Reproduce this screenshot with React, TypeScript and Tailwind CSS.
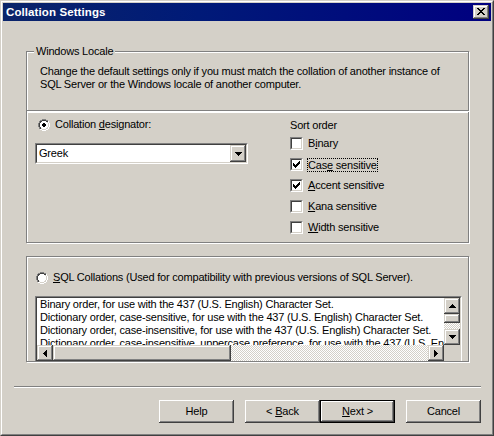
import React from "react";

function Pixels({ rows, colors, className }: { rows: string[]; colors: Record<string, string>; className?: string }) {
  const h = rows.length;
  const w = rows[0].length;
  const rects: React.ReactNode[] = [];
  rows.forEach((r, y) => {
    for (let x = 0; x < r.length; x++) {
      const c = colors[r[x]];
      if (c) rects.push(<rect key={x + "-" + y} x={x} y={y} width={1} height={1} fill={c} />);
    }
  });
  return (
    <svg width={w} height={h} viewBox={`0 0 ${w} ${h}`} shapeRendering="crispEdges" className={className}>
      {rects}
    </svg>
  );
}

const BLACK = { "#": "#000000" };

function Radio({ checked }: { checked?: boolean }) {
  const rows = [
    "....gggg....",
    "..ggddddgg..",
    ".gddwwwwddh.",
    ".gdwwwwwwlh.",
    "gdwwwwwwwwlh",
    "gdwwwwwwwwlh",
    "gdwwwwwwwwlh",
    "gdwwwwwwwwlh",
    ".gdwwwwwwlh.",
    ".gdlwwwwllh.",
    "..hhllllhh..",
    "....hhhh....",
  ];
  const dot = checked
    ? rows.map((r, y) =>
        r
          .split("")
          .map((ch, x) => {
            if ((y === 4 || y === 7) && x >= 5 && x <= 6) return "#";
            if ((y === 5 || y === 6) && x >= 4 && x <= 7) return "#";
            return ch;
          })
          .join("")
      )
    : rows;
  return (
    <Pixels
      className="shrink-0"
      rows={dot}
      colors={{ g: "#808080", d: "#404040", w: "#ffffff", l: "#d4d0c8", h: "#ffffff", "#": "#000000" }}
    />
  );
}

function Check({ checked }: { checked?: boolean }) {
  return (
    <div className="w-[13px] h-[13px] shrink-0 border border-t-[#808080] border-l-[#808080] border-r-white border-b-white">
      <div className="w-full h-full border border-t-[#404040] border-l-[#404040] border-r-[#d4d0c8] border-b-[#d4d0c8] bg-white flex items-center justify-center">
        {checked && (
          <Pixels
            colors={BLACK}
            rows={["......#", ".....##", "#...###", "##.###.", "#####..", ".###...", "..#...."]}
          />
        )}
      </div>
    </div>
  );
}

const SB_BTN =
  "bg-[#d4d0c8] shadow-[inset_-1px_-1px_0_#404040,inset_1px_1px_0_#d4d0c8,inset_-2px_-2px_0_#808080,inset_2px_2px_0_#ffffff]";

const DOWN = ["#######", ".#####.", "..###..", "...#..."];
const UP = ["...#...", "..###..", ".#####.", "#######"];
const RIGHT = ["#...", "##..", "###.", "####", "###.", "##..", "#..."];
const LEFT = ["...#", "..##", ".###", "####", ".###", "..##", "...#"];

function ArrowBtn({ rows, className }: { rows: string[]; className: string }) {
  return (
    <div className={`${SB_BTN} ${className} flex items-center justify-center shrink-0`}>
      <Pixels rows={rows} colors={BLACK} />
    </div>
  );
}

const DITHER = "bg-[repeating-conic-gradient(#ffffff_0%_25%,#d4d0c8_0%_50%)] bg-[length:2px_2px]";

function PushButton({ children, isDefault }: { children: React.ReactNode; isDefault?: boolean }) {
  const inner = (
    <div className="w-full h-full flex items-center justify-center bg-[#d4d0c8] shadow-[inset_-1px_-1px_0_#404040,inset_1px_1px_0_#ffffff,inset_-2px_-2px_0_#808080,inset_2px_2px_0_#d4d0c8]">
      <span>{children}</span>
    </div>
  );
  return (
    <div className={`w-[75px] h-[23px] shrink-0 ${isDefault ? "border border-black" : ""}`}>{inner}</div>
  );
}

export default function App() {
  const lines = [
    "Binary order, for use with the 437 (U.S. English) Character Set.",
    "Dictionary order, case-sensitive, for use with the 437 (U.S. English) Character Set.",
    "Dictionary order, case-insensitive, for use with the 437 (U.S. English) Character Set.",
    "Dictionary order, case-insensitive, uppercase preference, for use with the 437 (U.S. English) Character Set.",
  ];
  const sorts: { label: React.ReactNode; checked?: boolean; focus?: boolean }[] = [
    { label: <>B<u>i</u>nary</> },
    { label: <>Cas<u>e</u> sensitive</>, checked: true, focus: true },
    { label: <><u>A</u>ccent sensitive</>, checked: true },
    { label: <><u>K</u>ana sensitive</> },
    { label: <><u>W</u>idth sensitive</> },
  ];
  return (
    <div className="w-[494px] h-[436px] bg-[#d4d0c8] border border-t-[#d4d0c8] border-l-[#d4d0c8] border-r-[#404040] border-b-[#404040] font-['Liberation_Sans',Arial,sans-serif] text-[11px] leading-[13px] tracking-[-0.2px] text-black select-none">
      <div className="w-full h-full border border-t-white border-l-white border-r-[#808080] border-b-[#808080] p-px flex flex-col">
        {/* Title bar */}
        <div className="h-[18px] shrink-0 flex items-center bg-[linear-gradient(to_right,#0a246a,#001a78_40%,#000080)] pl-[3px] pr-[2px]">
          <span className="text-white font-bold text-[11.5px] tracking-[0.1px] flex-1">Collation Settings</span>
          <div className={`${SB_BTN} w-[16px] h-[14px] flex items-center justify-center`}>
            <Pixels
              colors={BLACK}
              rows={["##....##", ".##..##.", "..####..", "...##...", "..####..", ".##..##.", "##....##"]}
              className="-ml-px -mt-px"
            />
          </div>
        </div>

        {/* Body */}
        <div className="flex-1 flex flex-col pl-[11px] pr-[10px] pt-[30px]">
          {/* Group 1 */}
          <div className="relative ml-[12px] w-[443px] h-[60px] shrink-0 border border-[#808080] shadow-[inset_1px_1px_0_#ffffff,1px_1px_0_#ffffff]">
            <span className="absolute -top-[7px] left-[7px] px-[2px] bg-[#d4d0c8]">Windows Locale</span>
            <p className="pt-[13px] pl-[13px]">
              Change the default settings only if you must match the collation of another instance of
              <br />
              SQL Server or the Windows locale of another computer.
            </p>
          </div>

          {/* Group 2 */}
          <div className="ml-[12px] w-[443px] h-[132px] shrink-0 border border-[#808080] shadow-[inset_1px_1px_0_#ffffff,1px_1px_0_#ffffff] flex">
            <div className="pl-[8px] pt-[6px] flex flex-col">
              <div className="flex items-center h-[13px] pl-[3px]">
                <Radio checked />
                <span className="ml-[5px]">
                  Collation <u>d</u>esignator:
                </span>
              </div>
              <div className="mt-[12px] w-[213px] h-[21px] border border-t-[#808080] border-l-[#808080] border-r-white border-b-white">
                <div className="w-full h-full border border-t-[#404040] border-l-[#404040] border-r-[#d4d0c8] border-b-[#d4d0c8] bg-white flex items-center">
                  <span className="flex-1 pl-[2px]">Greek</span>
                  <ArrowBtn rows={DOWN} className="w-[16px] h-[17px]" />
                </div>
              </div>
            </div>
            <div className="ml-[42px] pt-[7px] flex flex-col">
              <div className="h-[13px]">Sort order</div>
              <div className="mt-[1px] flex flex-col">
                {sorts.map((s, i) => (
                  <div key={i} className="h-[21px] flex items-center">
                    <Check checked={s.checked} />
                    {s.focus ? (
                      <span className="ml-[4px] border border-dotted border-black leading-[12px]">{s.label}</span>
                    ) : (
                      <span className="ml-[5px]">{s.label}</span>
                    )}
                  </div>
                ))}
              </div>
            </div>
          </div>

          {/* Group 3 */}
          <div className="mt-[13px] ml-[12px] w-[443px] h-[106px] shrink-0 border border-[#808080] shadow-[inset_1px_1px_0_#ffffff,1px_1px_0_#ffffff] flex flex-col">
            <div className="pt-[14px] pl-[9px] flex items-center">
              <Radio />
              <span className="ml-[5px]">
                <u>S</u>QL Collations (Used for compatibility with previous versions of SQL Server).
              </span>
            </div>
            <div className="mt-[12px] ml-[8px] w-[427px] h-[65px] border-t border-l border-r border-t-[#808080] border-l-[#808080] border-r-white">
              <div className="w-full h-full border-t border-l border-r border-t-[#404040] border-l-[#404040] border-r-[#d4d0c8] bg-white flex flex-col">
                <div className="flex h-[47px] shrink-0">
                  <div className="flex-1 overflow-hidden pl-[3px] whitespace-nowrap">
                    {lines.map((l, i) => (
                      <div key={i} className="h-[13px]">
                        {l}
                      </div>
                    ))}
                  </div>
                  <div className="w-[16px] flex flex-col shrink-0">
                    <ArrowBtn rows={UP} className="w-[16px] h-[16px]" />
                    <div className={`${SB_BTN} w-[16px] h-[9px]`} />
                    <div className={`${DITHER} w-[16px] h-[6px]`} />
                    <ArrowBtn rows={DOWN} className="w-[16px] h-[16px]" />
                  </div>
                </div>
                <div className="flex h-[16px] shrink-0">
                  <div className="flex-1 flex">
                    <ArrowBtn rows={LEFT} className="w-[16px] h-[16px]" />
                    <div className={`${SB_BTN} w-[178px] h-[16px]`} />
                    <div className={`${DITHER} flex-1 h-[16px]`} />
                    <ArrowBtn rows={RIGHT} className="w-[16px] h-[16px]" />
                  </div>
                  <div className="w-[16px] bg-[#d4d0c8]" />
                </div>
              </div>
            </div>
          </div>

          {/* Separator */}
          <div className="mt-[24px] h-[2px] shrink-0 border-t border-t-[#808080] border-b border-b-white" />

          {/* Buttons */}
          <div className="mt-[12px] flex justify-end">
            <PushButton>Help</PushButton>
            <div className="w-[11px]" />
            <PushButton>
              &lt; <u>B</u>ack
            </PushButton>
            <PushButton isDefault>
              <u>N</u>ext &gt;
            </PushButton>
            <div className="w-[11px]" />
            <PushButton>Cancel</PushButton>
          </div>
        </div>
      </div>
    </div>
  );
}
